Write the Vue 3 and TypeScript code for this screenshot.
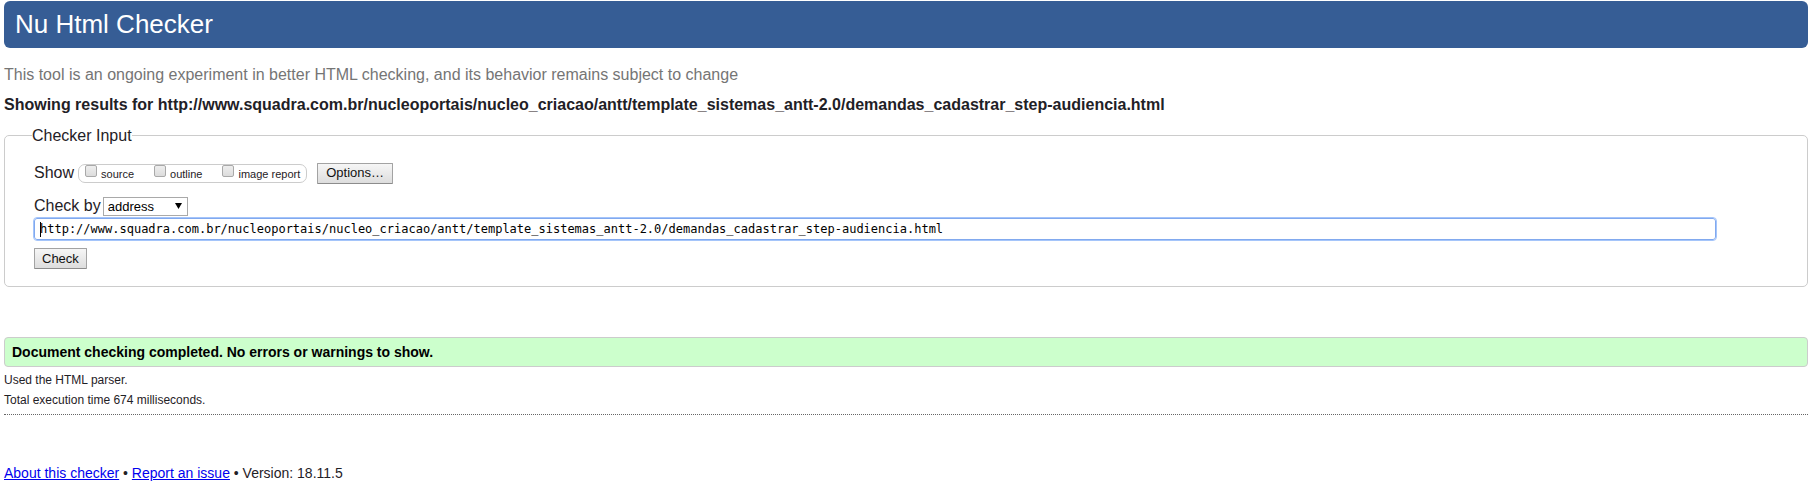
<script setup lang="ts">
import { ref } from 'vue'

const address = ref(
  'http://www.squadra.com.br/nucleoportais/nucleo_criacao/antt/template_sistemas_antt-2.0/demandas_cadastrar_step-audiencia.html'
)
const checked = address.value
const method = ref('address')
const views = ref([
  { id: 'source', label: 'source', on: false },
  { id: 'outline', label: 'outline', on: false },
  { id: 'imagereport', label: 'image report', on: false }
])
</script>

<template>
  <div class="page">
    <header class="banner"><h1>Nu Html Checker</h1></header>
    <main>
      <p class="intro">This tool is an ongoing experiment in better HTML checking, and its behavior remains subject to change</p>
      <h2>Showing results for {{ checked }}</h2>
      <form @submit.prevent>
        <fieldset>
          <legend>Checker Input</legend>
          <div class="row show">
            <span>Show</span>
            <div class="views">
              <label v-for="v in views" :key="v.id" :for="v.id">
                <input :id="v.id" v-model="v.on" type="checkbox" />
                <span>{{ v.label }}</span>
              </label>
            </div>
            <button type="button" class="options">Options…</button>
          </div>
          <div class="row by">
            <label for="method">Check by</label>
            <div class="select">
              <select id="method" v-model="method">
                <option value="address">address</option>
                <option value="file">file upload</option>
                <option value="text">text input</option>
              </select>
              <svg viewBox="0 0 7 6" aria-hidden="true"><path d="M0 0H7L3.5 6Z" /></svg>
            </div>
          </div>
          <div class="field">
            <input id="doc" v-model="address" type="text" aria-label="Address of page to check" spellcheck="false" />
          </div>
          <button type="submit">Check</button>
        </fieldset>
      </form>
      <p class="success">Document checking completed. No errors or warnings to show.</p>
      <p class="detail">Used the HTML parser.</p>
      <p class="detail">Total execution time 674 milliseconds.</p>
    </main>
    <footer>
      <a href="#about">About this checker</a> • <a href="#issue">Report an issue</a> • Version: 18.11.5
    </footer>
  </div>
</template>

<style scoped>
.page {
  padding: 1px 9px 0 4px;
  font: 16px/20px "Liberation Sans", Arial, sans-serif;
  color: #1f2126;
}
h1, h2, p { margin: 0; }
.banner {
  padding: 8px 11px 9px;
  border-radius: 6px;
  background: #365d95;
  color: #fff;
}
h1 { font-size: 26px; line-height: 30px; font-weight: 400; }
.intro { margin-top: 17px; color: #757575; }
h2 { margin-top: 10px; font-size: 16px; line-height: 20px; }
fieldset {
  margin: 9px 0 0;
  padding: 15px 91px 17px 29px;
  border: 1px solid #ccc;
  border-radius: 5px;
  min-width: 0;
}
legend { margin-left: -2px; padding: 2px 0 0; }
.row { display: flex; align-items: center; }
.show { height: 24px; }
.views {
  display: flex;
  gap: 20px;
  box-sizing: border-box;
  height: 19px;
  margin: 0 10px 0 4px;
  padding: 0 6px;
  border: 1px solid #ccc;
  border-radius: 7px;
}
.views label {
  display: flex;
  gap: 4px;
  font-size: 11px;
  line-height: 18px;
}
.views input {
  appearance: none;
  box-sizing: border-box;
  width: 12px;
  height: 12px;
  margin: 0;
  border: 1px solid #a9a9a9;
  border-radius: 2px;
  background: linear-gradient(#eee, #dcdcdc);
}
.views input:checked { background: #666; }
button {
  display: block;
  box-sizing: border-box;
  height: 21px;
  margin: 0;
  padding: 0 7px;
  border: 1px solid #a3a3a3;
  border-bottom-color: #8c8c8c;
  border-radius: 1px;
  background: linear-gradient(#f6f6f6, #ddd);
  color: #111;
  font: 13px/18px "Liberation Sans", Arial, sans-serif;
}
.options { padding: 0 8px; }
.by { gap: 2px; height: 20px; margin-top: 11px; }
.select { position: relative; }
select {
  display: block;
  appearance: none;
  box-sizing: border-box;
  width: 85px;
  height: 19px;
  padding: 0 16px 0 4px;
  border: 1px solid #a9a9a9;
  border-radius: 0;
  background: #fff;
  color: #000;
  font: 13px/17px "Liberation Sans", Arial, sans-serif;
}
.select svg {
  position: absolute;
  right: 6px;
  top: 6px;
  width: 7px;
  height: 6px;
  pointer-events: none;
}
.field { position: relative; margin: 2px 0 8px; }
.field input {
  display: block;
  box-sizing: border-box;
  width: 100%;
  height: 22px;
  padding: 0 5px;
  border: 1px solid #81a9ef;
  border-radius: 3px;
  outline: 1px solid #a5c5fa;
  background: #fff;
  color: #000;
  font: 12px/20px "DejaVu Sans Mono", monospace;
}
/* Text insertion mark at the start of the address */
.field::before {
  content: "";
  position: absolute;
  left: 6px;
  top: 4px;
  width: 1px;
  height: 15px;
  background: #000;
}
.success {
  margin-top: 50px;
  padding: 5px 7px;
  border: 1px solid #ccc;
  border-radius: 4px;
  background: #cfc;
  color: #000;
  font-size: 14px;
  line-height: 18px;
  font-weight: 700;
}
.detail { margin-top: 2px; font-size: 12px; line-height: 18px; }
.success + .detail { margin-top: 4px; }
main { padding-bottom: 5px; border-bottom: 1px dotted #666; }
footer { margin-top: 48px; font-size: 14px; line-height: 20px; }
footer a { color: #00e; }
</style>

<style>
body { margin: 0; background: #fff; }
</style>
